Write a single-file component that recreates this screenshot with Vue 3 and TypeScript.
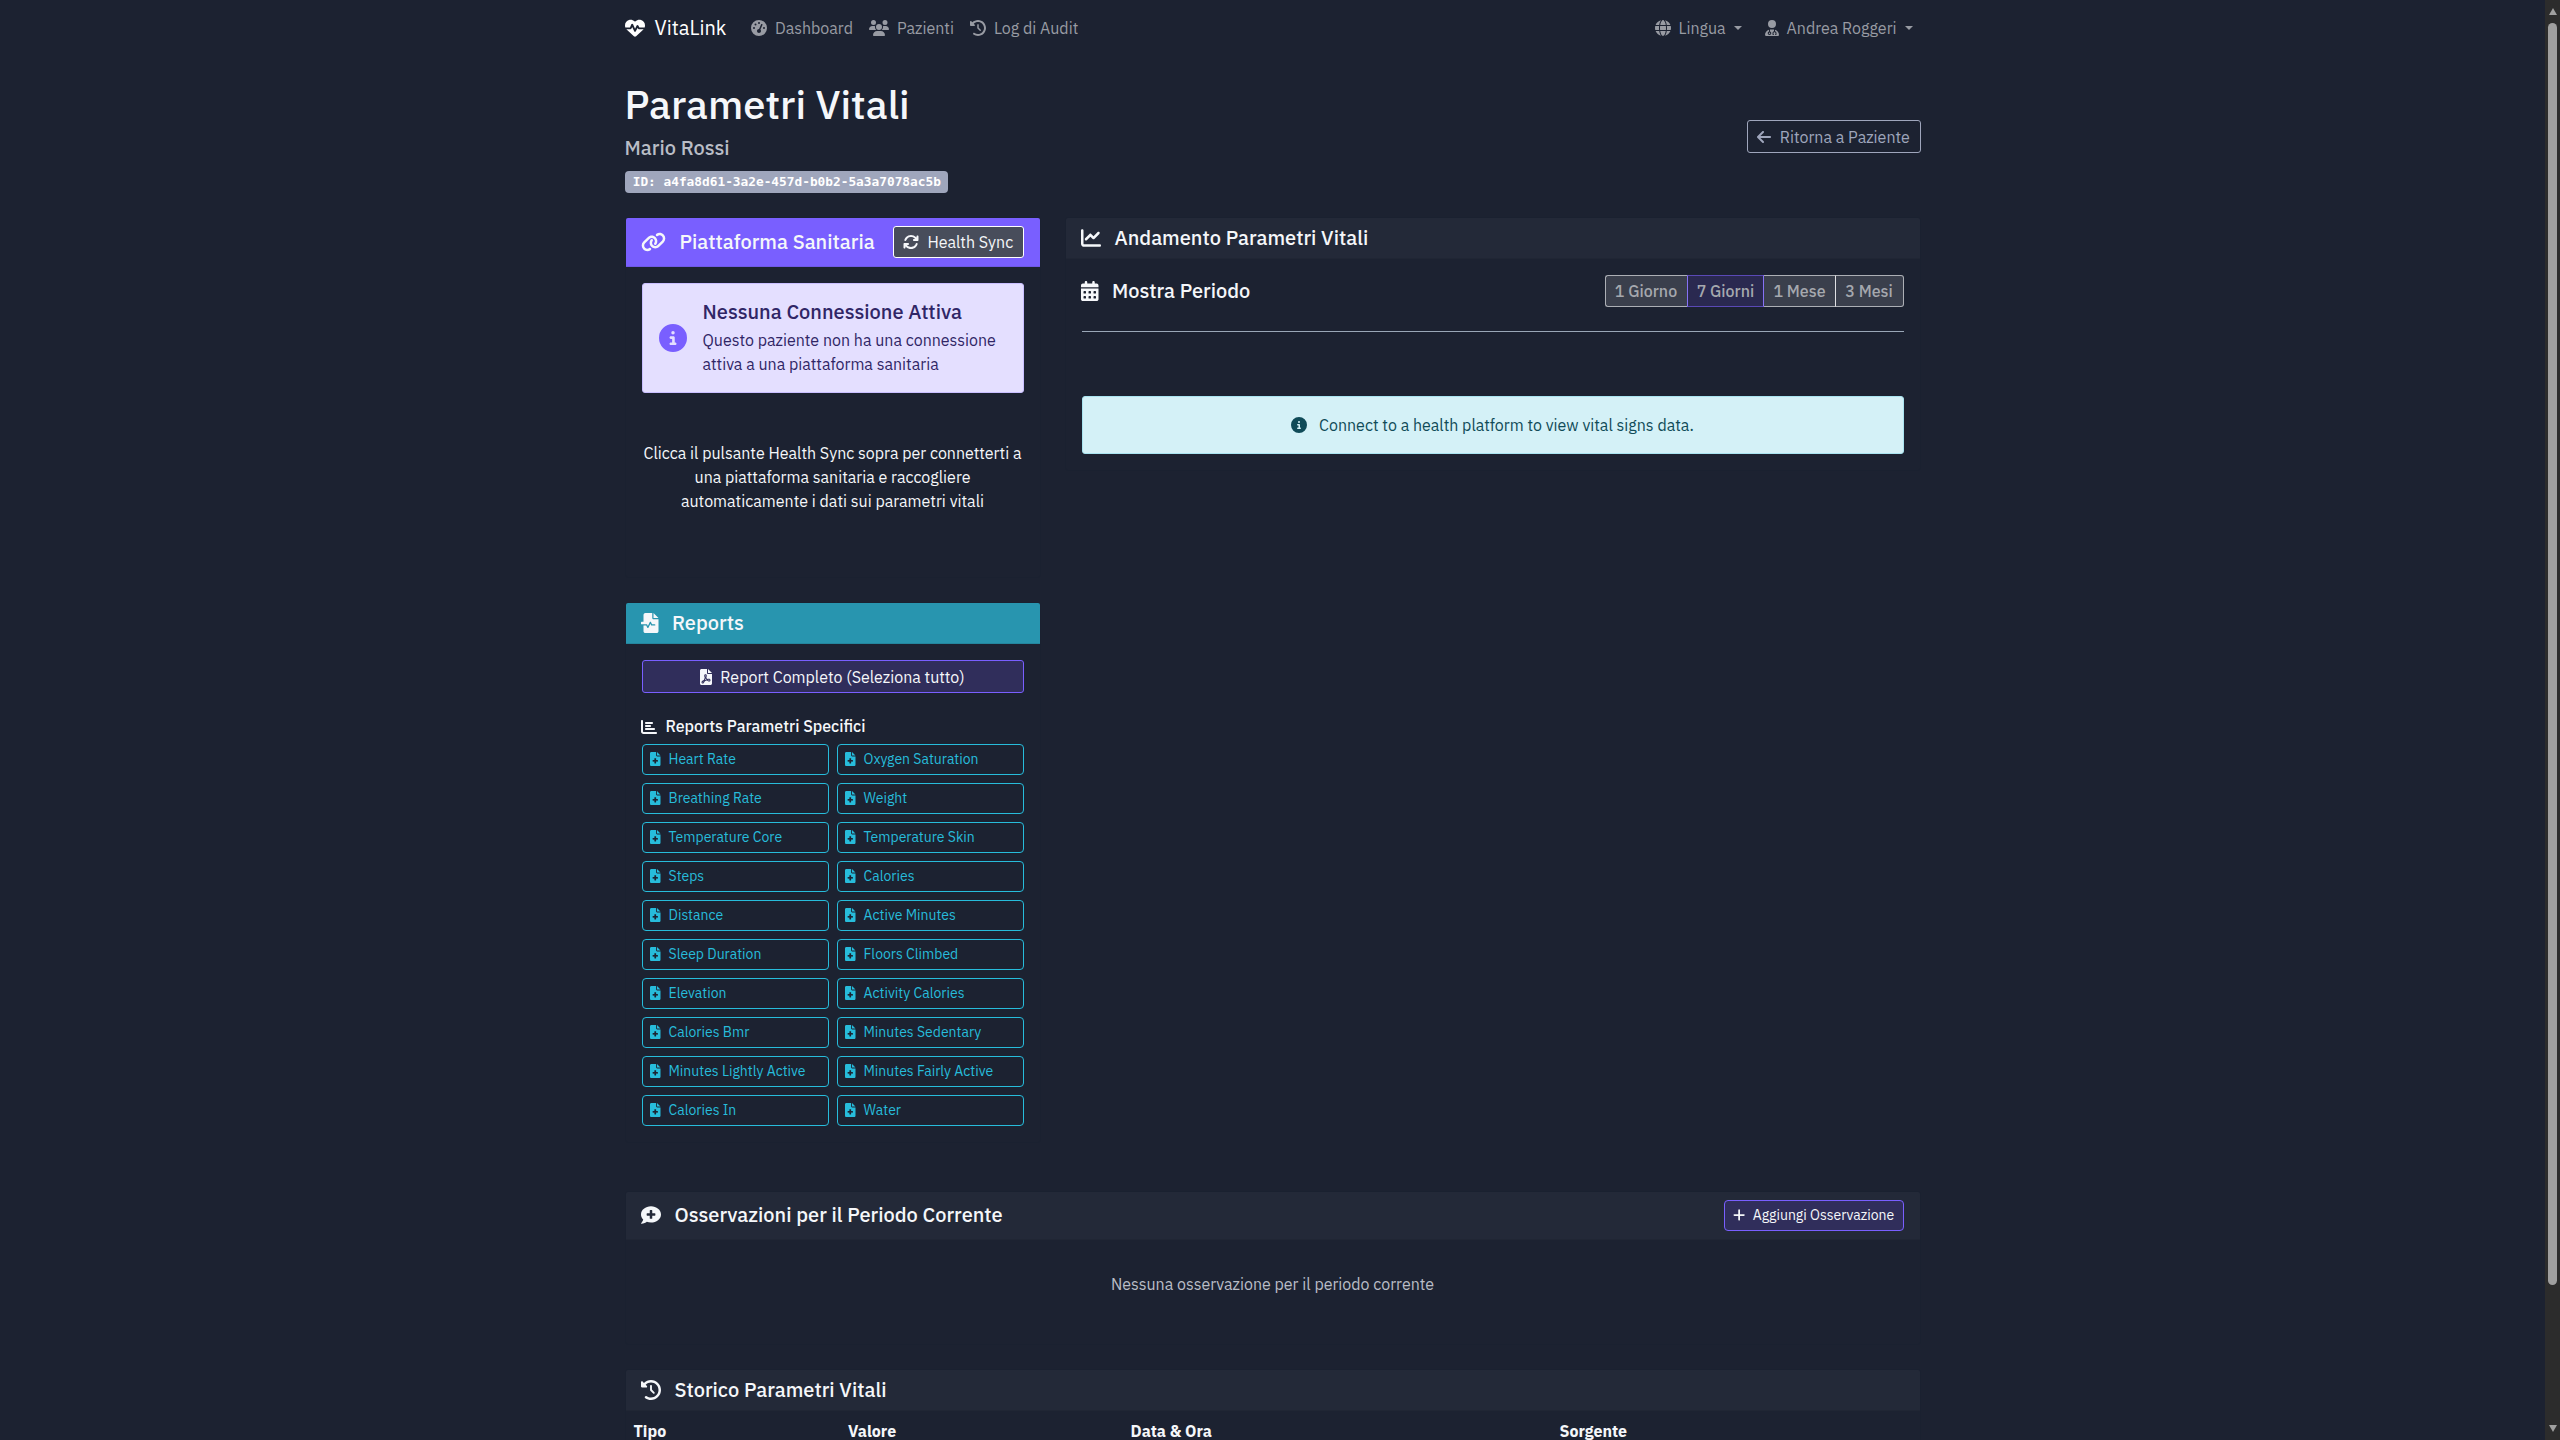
<script setup lang="ts">
import { h, type FunctionalComponent } from 'vue'

interface Glyph {
  w: number
  d: string
}

const glyphs: Record<string, Glyph> = {
  heart: {
    w: 512,
    d: 'M228.3 469.1L47.6 300.4c-4.2-3.9-8.2-8.1-11.9-12.4h87c22.6 0 43-13.6 51.7-34.5l10.5-25.2 49.3 109.5c3.8 8.5 12.1 14 21.4 14.1s17.8-5 22-13.3L320 253.7l1.7 3.4c9.5 19 28.9 31 50.1 31H476.3c-3.7 4.3-7.7 8.5-11.9 12.4L283.7 469.1c-7.5 7-17.4 10.9-27.7 10.9s-20.2-3.9-27.7-10.9zM503.7 240h-132c-3 0-5.8-1.7-7.2-4.4l-23.2-46.3c-4.1-8.1-12.4-13.3-21.5-13.3s-17.4 5.1-21.5 13.3l-41.4 82.8L205.9 158.2c-3.9-8.7-12.7-14.3-22.2-14.1s-18.1 5.9-21.8 14.8l-31.8 76.3c-1.2 3-4.2 4.9-7.4 4.9H16c-2.6 0-5 .4-7.3 1.1C3 225.2 0 208.2 0 190.9v-5.8c0-69.9 50.5-129.5 119.4-141C165 36.5 211.4 51.4 244 84l12 12 12-12c32.6-32.6 79-47.5 124.6-39.9C461.5 55.6 512 115.2 512 185.1v5.8c0 16.9-2.8 33.5-8.3 49.1z',
  },
  gauge: {
    w: 512,
    d: 'M0 256a256 256 0 1 1 512 0A256 256 0 1 1 0 256zM288 96a32 32 0 1 0 -64 0 32 32 0 1 0 64 0zM256 416c35.3 0 64-28.7 64-64c0-17.4-6.9-33.1-18.1-44.6L366 161.7c5.3-12.1-.2-26.3-12.3-31.6s-26.3 .2-31.6 12.3L257.9 288c-.6 0-1.3 0-1.9 0c-35.3 0-64 28.7-64 64s28.7 64 64 64zM176 144a32 32 0 1 0 -64 0 32 32 0 1 0 64 0zM96 288a32 32 0 1 0 0-64 32 32 0 1 0 0 64zm352-32a32 32 0 1 0 -64 0 32 32 0 1 0 64 0z',
  },
  users: {
    w: 640,
    d: 'M144 0a80 80 0 1 1 0 160A80 80 0 1 1 144 0zM512 0a80 80 0 1 1 0 160A80 80 0 1 1 512 0zM0 298.7C0 239.8 47.8 192 106.7 192h42.7c15.9 0 31 3.5 44.6 9.7c-1.3 7.2-1.9 14.7-1.9 22.3c0 38.2 16.8 72.5 43.3 96c-.2 0-.4 0-.7 0H21.3C9.6 320 0 310.4 0 298.7zM405.3 320c-.2 0-.4 0-.7 0c26.6-23.5 43.3-57.8 43.3-96c0-7.6-.7-15-1.9-22.3c13.6-6.3 28.7-9.7 44.6-9.7h42.7C592.2 192 640 239.8 640 298.7c0 11.8-9.6 21.3-21.3 21.3H405.3zM224 224a96 96 0 1 1 192 0 96 96 0 1 1 -192 0zM128 485.3C128 411.7 187.7 352 261.3 352H378.7C452.3 352 512 411.7 512 485.3c0 14.7-11.9 26.7-26.7 26.7H154.7c-14.7 0-26.7-11.9-26.7-26.7z',
  },
  history: {
    w: 512,
    d: 'M75 75L41 41C25.9 25.9 0 36.6 0 57.9V168c0 13.3 10.7 24 24 24H134.1c21.4 0 32.1-25.9 17-41l-30.8-30.8C155 85.5 203 64 256 64c106 0 192 86 192 192s-86 192-192 192c-40.8 0-78.6-12.7-109.7-34.4c-14.5-10.1-34.4-6.6-44.6 7.9s-6.6 34.4 7.9 44.6C151.2 495 201.7 512 256 512c141.4 0 256-114.6 256-256S397.4 0 256 0C185.3 0 121.3 28.7 75 75zm181 53c-13.3 0-24 10.7-24 24V256c0 6.4 2.5 12.5 7 17l72 72c9.4 9.4 24.6 9.4 33.9 0s9.4-24.6 0-33.9l-65-65V152c0-13.3-10.7-24-24-24z',
  },
  globe: {
    w: 512,
    d: 'M352 256c0 22.2-1.2 43.6-3.3 64H163.3c-2.2-20.4-3.3-41.8-3.3-64s1.2-43.6 3.3-64H348.7c2.2 20.4 3.3 41.8 3.3 64zm28.8-64H503.9c5.3 20.5 8.1 41.9 8.1 64s-2.8 43.5-8.1 64H380.8c2.1-20.6 3.2-42 3.2-64s-1.1-43.4-3.2-64zm112.6-32H376.7c-10-63.9-29.8-117.4-55.3-151.6c78.3 20.7 142 77.5 171.9 151.6zm-149.1 0H167.7c6.1-36.4 15.5-68.6 27-94.7c10.5-23.6 22.2-40.7 33.5-51.5C239.4 3.2 248.7 0 256 0s16.6 3.2 27.8 13.8c11.3 10.8 23 27.9 33.5 51.5c11.6 26 20.9 58.2 27 94.7zm-209 0H18.6C48.6 85.9 112.2 29.1 190.6 8.4C165.1 42.6 145.3 96.1 135.3 160zM8.1 192H131.2c-2.1 20.6-3.2 42-3.2 64s1.1 43.4 3.2 64H8.1C2.8 299.5 0 278.1 0 256s2.8-43.5 8.1-64zM194.7 446.6c-11.6-26-20.9-58.2-27-94.6H344.3c-6.1 36.4-15.5 68.6-27 94.6c-10.5 23.6-22.2 40.7-33.5 51.5C272.6 508.8 263.3 512 256 512s-16.6-3.2-27.8-13.8c-11.3-10.8-23-27.9-33.5-51.5zM135.3 352c10 63.9 29.8 117.4 55.3 151.6C112.2 482.9 48.6 426.1 18.6 352H135.3zm358.1 0c-30 74.1-93.6 130.9-171.9 151.6c25.5-34.2 45.2-87.7 55.3-151.6H493.4z',
  },
  doctor: {
    w: 448,
    d: 'M224 256a128 128 0 1 0 0-256 128 128 0 1 0 0 256zm-96 55.2C54 332.9 0 401.3 0 482.3C0 498.7 13.3 512 29.7 512H418.3c16.4 0 29.7-13.3 29.7-29.7c0-81-54-149.4-128-171.1V362c27.6 7.1 48 32.2 48 62v40c0 8.8-7.2 16-16 16H336c-8.8 0-16-7.2-16-16s7.2-16 16-16V424c0-17.7-14.3-32-32-32s-32 14.3-32 32v24c8.8 0 16 7.2 16 16s-7.2 16-16 16H256c-8.8 0-16-7.2-16-16V424c0-29.8 20.4-54.9 48-62V304.9c-6-.6-12.1-.9-18.3-.9H178.3c-6.2 0-12.3 .3-18.3 .9v65.4c23.1 6.9 40 28.3 40 53.7c0 30.9-25.1 56-56 56s-56-25.1-56-56c0-25.4 16.9-46.8 40-53.7V311.2zM144 448a24 24 0 1 0 0-48 24 24 0 1 0 0 48z',
  },
  arrowLeft: {
    w: 448,
    d: 'M9.4 233.4c-12.5 12.5-12.5 32.8 0 45.3l160 160c12.5 12.5 32.8 12.5 45.3 0s12.5-32.8 0-45.3L109.2 288 416 288c17.7 0 32-14.3 32-32s-14.3-32-32-32l-306.7 0L214.6 118.6c12.5-12.5 12.5-32.8 0-45.3s-32.8-12.5-45.3 0l-160 160z',
  },
  link: {
    w: 640,
    d: 'M579.8 267.7c56.5-56.5 56.5-148 0-204.5c-50-50-128.8-56.5-186.3-15.4l-1.6 1.1c-14.4 10.3-17.7 30.3-7.4 44.6s30.3 17.7 44.6 7.4l1.6-1.1c32.1-22.9 76-19.3 103.8 8.6c31.5 31.5 31.5 82.5 0 114L422.3 334.8c-31.5 31.5-82.5 31.5-114 0c-27.9-27.9-31.5-71.8-8.6-103.8l1.1-1.6c10.3-14.4 6.9-34.4-7.4-44.6s-34.4-6.9-44.6 7.4l-1.1 1.6C206.5 251.2 213 330 263 380c56.5 56.5 148 56.5 204.5 0L579.8 267.7zM60.2 244.3c-56.5 56.5-56.5 148 0 204.5c50 50 128.8 56.5 186.3 15.4l1.6-1.1c14.4-10.3 17.7-30.3 7.4-44.6s-30.3-17.7-44.6-7.4l-1.6 1.1c-32.1 22.9-76 19.3-103.8-8.6C74 372 74 321 105.5 289.5L217.7 177.2c31.5-31.5 82.5-31.5 114 0c27.9 27.9 31.5 71.8 8.6 103.9l-1.1 1.6c-10.3 14.4-6.9 34.4 7.4 44.6s34.4 6.9 44.6-7.4l1.1-1.6C433.5 260.8 427 182 377 132c-56.5-56.5-148-56.5-204.5 0L60.2 244.3z',
  },
  sync: {
    w: 512,
    d: 'M105.1 202.6c7.7-21.8 20.2-42.3 37.8-59.8c62.5-62.5 163.8-62.5 226.3 0L386.3 160H352c-17.7 0-32 14.3-32 32s14.3 32 32 32H463.5c0 0 0 0 0 0h.4c17.7 0 32-14.3 32-32V80c0-17.7-14.3-32-32-32s-32 14.3-32 32v35.2L414.4 97.6c-87.5-87.5-229.3-87.5-316.8 0C73.2 122 55.6 150.7 44.8 181.4c-5.9 16.7 2.9 34.9 19.5 40.8s34.9-2.9 40.8-19.5zM39 289.3c-5 1.5-9.8 4.2-13.7 8.2c-4 4-6.7 8.8-8.1 14c-.3 1.2-.6 2.5-.8 3.8c-.3 1.7-.4 3.4-.4 5.1V432c0 17.7 14.3 32 32 32s32-14.3 32-32V396.9l17.6 17.5 0 0c87.5 87.4 229.3 87.4 316.7 0c24.4-24.4 42.1-53.1 52.9-83.7c5.9-16.7-2.9-34.9-19.5-40.8s-34.9 2.9-40.8 19.5c-7.7 21.8-20.2 42.3-37.8 59.8c-62.5 62.5-163.8 62.5-226.3 0l-.1-.1L125.6 352H160c17.7 0 32-14.3 32-32s-14.3-32-32-32H48.4c-1.6 0-3.2 .1-4.8 .3s-3.1 .5-4.6 1z',
  },
  info: {
    w: 512,
    d: 'M256 512A256 256 0 1 0 256 0a256 256 0 1 0 0 512zM216 336h24V272H216c-13.3 0-24-10.7-24-24s10.7-24 24-24h48c13.3 0 24 10.7 24 24v88h8c13.3 0 24 10.7 24 24s-10.7 24-24 24H216c-13.3 0-24-10.7-24-24s10.7-24 24-24zm40-208a32 32 0 1 1 0 64 32 32 0 1 1 0-64z',
  },
  chartLine: {
    w: 512,
    d: 'M64 64c0-17.7-14.3-32-32-32S0 46.3 0 64V400c0 44.2 35.8 80 80 80H480c17.7 0 32-14.3 32-32s-14.3-32-32-32H80c-8.8 0-16-7.2-16-16V64zm406.6 86.6c12.5-12.5 12.5-32.8 0-45.3s-32.8-12.5-45.3 0L320 210.7l-57.4-57.4c-12.5-12.5-32.8-12.5-45.3 0l-112 112c-12.5 12.5-12.5 32.8 0 45.3s32.8 12.5 45.3 0L240 221.3l57.4 57.4c12.5 12.5 32.8 12.5 45.3 0l128-128z',
  },
  calendar: {
    w: 448,
    d: 'M128 0c17.7 0 32 14.3 32 32V64H288V32c0-17.7 14.3-32 32-32s32 14.3 32 32V64h48c26.5 0 48 21.5 48 48v48H0V112C0 85.5 21.5 64 48 64H96V32c0-17.7 14.3-32 32-32zM0 192H448V464c0 26.5-21.5 48-48 48H48c-26.5 0-48-21.5-48-48V192zm64 80v32c0 8.8 7.2 16 16 16h32c8.8 0 16-7.2 16-16V272c0-8.8-7.2-16-16-16H80c-8.8 0-16 7.2-16 16zm128 0v32c0 8.8 7.2 16 16 16h32c8.8 0 16-7.2 16-16V272c0-8.8-7.2-16-16-16H208c-8.8 0-16 7.2-16 16zm144-16c-8.8 0-16 7.2-16 16v32c0 8.8 7.2 16 16 16h32c8.8 0 16-7.2 16-16V272c0-8.8-7.2-16-16-16H336zM64 400v32c0 8.8 7.2 16 16 16h32c8.8 0 16-7.2 16-16V400c0-8.8-7.2-16-16-16H80c-8.8 0-16 7.2-16 16zm144-16c-8.8 0-16 7.2-16 16v32c0 8.8 7.2 16 16 16h32c8.8 0 16-7.2 16-16V400c0-8.8-7.2-16-16-16H208zm112 16v32c0 8.8 7.2 16 16 16h32c8.8 0 16-7.2 16-16V400c0-8.8-7.2-16-16-16H336c-8.8 0-16 7.2-16 16z',
  },
  fileWave: {
    w: 448,
    d: 'M320 0v128h128L320 0zM288 128L288 0H112C85.49 0 64 21.49 64 48V224H16C7.164 224 0 231.2 0 240v32C0 280.8 7.164 288 16 288h128c6.062 0 11.59 3.438 14.31 8.844L176 332.2l49.69-99.38c5.438-10.81 23.19-10.81 28.62 0L281.9 288H352c8.844 0 16 7.156 16 16S360.8 320 352 320h-80c-6.062 0-11.59-3.438-14.31-8.844L240 275.8l-49.69 99.38C187.6 380.6 182.1 384 176 384s-11.59-3.438-14.31-8.844L134.1 320H64v144C64 490.5 85.49 512 112 512h288c26.51 0 48-21.49 48-48V160h-127.1C302.3 160 288 145.7 288 128z',
  },
  filePdf: {
    w: 384,
    d: 'M184 208c0-4.406-3.594-8-8-8S168 203.6 168 208c0 2.062 .2969 23.31 9.141 50.25C179.1 249.6 184 226.2 184 208zM256 0v128h128L256 0zM80 422.4c0 9.656 10.47 11.97 14.38 6.375C99.27 421.9 108.8 408 120.1 388.6c-14.22 7.969-27.25 17.31-38.02 28.31C80.75 418.3 80 420.3 80 422.4zM224 128L224 0H48C21.49 0 0 21.49 0 48v416C0 490.5 21.49 512 48 512h288c26.51 0 48-21.49 48-48V160h-127.1C238.3 160 224 145.7 224 128zM292 312c24.26 0 44 19.74 44 44c0 24.67-18.94 44-43.13 44c-5.994 0-11.81-.9531-17.22-2.805c-20.06-6.758-38.38-15.96-54.55-27.39c-23.88 5.109-45.46 11.52-64.31 19.1c-14.43 26.31-27.63 46.15-36.37 58.41C112.1 457.8 100.8 464 87.94 464C65.92 464 48 446.1 48 424.1c0-11.92 3.74-21.82 11.18-29.51c16.18-16.52 37.37-30.99 63.02-43.05c11.75-22.83 21.94-46.04 30.33-69.14C136.2 242.4 136 208.4 136 208c0-22.05 17.95-40 40-40c22.06 0 40 17.95 40 40c0 24.1-7.227 55.75-8.938 62.63c-1.006 3.273-2.035 6.516-3.082 9.723c7.83 14.46 17.7 27.21 29.44 38.05C263.1 313.4 284.3 312.1 287.8 312H292zM156.5 354.6c17.98-6.5 36.13-11.44 52.92-15.19c-12.42-12.06-22.17-25.12-29.8-38.16C172.3 320.6 164.4 338.5 156.5 354.6zM292.9 368C299 368 304 363 304 356.9C304 349.4 298.6 344 292 344H288c-.3438 .0313-16.83 .9687-40.95 4.75c11.27 7 24.12 13.19 38.84 18.12C288.2 367.6 290.6 368 292.9 368z',
  },
  fileMedical: {
    w: 384,
    d: 'M256 0v128h128L256 0zM224 128L224 0H48C21.49 0 0 21.49 0 48v416C0 490.5 21.49 512 48 512h288c26.51 0 48-21.49 48-48V160h-127.1C238.3 160 224 145.7 224 128zM288 301.7v36.57C288 345.9 281.9 352 274.3 352L224 351.1v50.29C224 409.9 217.9 416 210.3 416H173.7C166.1 416 160 409.9 160 402.3V351.1L109.7 352C102.1 352 96 345.9 96 338.3V301.7C96 294.1 102.1 288 109.7 288H160V237.7C160 230.1 166.1 224 173.7 224h36.57C217.9 224 224 230.1 224 237.7V288h50.29C281.9 288 288 294.1 288 301.7z',
  },
  chartBar: {
    w: 512,
    d: 'M32 32c17.7 0 32 14.3 32 32V400c0 8.8 7.2 16 16 16H480c17.7 0 32 14.3 32 32s-14.3 32-32 32H80c-44.2 0-80-35.8-80-80V64C0 46.3 14.3 32 32 32zm96 96c0-17.7 14.3-32 32-32l192 0c17.7 0 32 14.3 32 32s-14.3 32-32 32H160c-17.7 0-32-14.3-32-32zm32 64H288c17.7 0 32 14.3 32 32s-14.3 32-32 32H160c-17.7 0-32-14.3-32-32s14.3-32 32-32zm0 96H416c17.7 0 32 14.3 32 32s-14.3 32-32 32H160c-17.7 0-32-14.3-32-32s14.3-32 32-32z',
  },
  comment: {
    w: 512,
    d: 'M256 32C114.6 32 0 125.1 0 240c0 49.6 21.4 95 57 130.7C44.5 421.1 2.7 466 2.2 466.5c-2.2 2.3-2.8 5.7-1.5 8.7S4.8 480 8 480c66.3 0 116-31.8 140.6-51.4 32.7 12.3 69 19.4 107.4 19.4 141.4 0 256-93.1 256-208S397.4 32 256 32zM368 258c0 8-6 14-14 14h-66v66c0 8-6 14-14 14h-36c-8 0-14-6-14-14v-66h-66c-8 0-14-6-14-14v-36c0-8 6-14 14-14h66v-66c0-8 6-14 14-14h36c8 0 14 6 14 14v66h66c8 0 14 6 14 14v36z',
  },
  plus: {
    w: 448,
    d: 'M432 256c0 17.69-14.33 32.01-32 32.01H256v144c0 17.69-14.33 31.99-32 31.99s-32-14.3-32-31.99v-144H48c-17.67 0-32-14.32-32-32.01s14.33-31.99 32-31.99H192v-144c0-17.69 14.33-32.01 32-32.01s32 14.32 32 32.01v144h144C417.7 224 432 238.3 432 256z',
  },
}

// Icons are one em high; their width follows the glyph's own aspect ratio.
const Icon: FunctionalComponent<{ name: string }> = (props) => {
  const g = glyphs[props.name]
  return h(
    'svg',
    { viewBox: `0 0 ${g.w} 512`, style: { width: `${g.w / 512}em`, height: '1em', flex: 'none', display: 'block' }, 'aria-hidden': 'true' },
    [h('path', { d: g.d, fill: 'currentColor' })],
  )
}
Icon.props = ['name']

const navLinks = [
  { icon: 'gauge', label: 'Dashboard' },
  { icon: 'users', label: 'Pazienti' },
  { icon: 'history', label: 'Log di Audit' },
]

const periods = [
  { label: '1 Giorno', active: false },
  { label: '7 Giorni', active: true },
  { label: '1 Mese', active: false },
  { label: '3 Mesi', active: false },
]

const reports = [
  'Heart Rate', 'Oxygen Saturation',
  'Breathing Rate', 'Weight',
  'Temperature Core', 'Temperature Skin',
  'Steps', 'Calories',
  'Distance', 'Active Minutes',
  'Sleep Duration', 'Floors Climbed',
  'Elevation', 'Activity Calories',
  'Calories Bmr', 'Minutes Sedentary',
  'Minutes Lightly Active', 'Minutes Fairly Active',
  'Calories In', 'Water',
]
</script>

<template>
  <div class="screen">
    <div class="page">
      <div class="container">
        <nav class="navbar">
          <a class="brand"><Icon name="heart" /><span>VitaLink</span></a>
          <a v-for="l in navLinks" :key="l.label" class="nav-link"><Icon :name="l.icon" /><span>{{ l.label }}</span></a>
          <div class="nav-right">
            <a class="nav-link"><Icon name="globe" /><span>Lingua</span><i class="caret"></i></a>
            <a class="nav-link"><Icon name="doctor" /><span>Andrea Roggeri</span><i class="caret"></i></a>
          </div>
        </nav>

        <header class="page-head">
          <div>
            <h1>Parametri Vitali</h1>
            <h5 class="patient">Mario Rossi</h5>
            <div class="badge">ID: a4fa8d61-3a2e-457d-b0b2-5a3a7078ac5b</div>
          </div>
          <button class="btn back"><Icon name="arrowLeft" /><span>Ritorna a Paziente</span></button>
        </header>

        <div class="columns">
          <div class="col-left">
            <section class="card">
              <div class="card-header purple">
                <h5><Icon name="link" /><span>Piattaforma Sanitaria</span></h5>
                <button class="btn sync"><Icon name="sync" /><span>Health Sync</span></button>
              </div>
              <div class="card-body">
                <div class="alert primary">
                  <Icon name="info" />
                  <div>
                    <h5>Nessuna Connessione Attiva</h5>
                    <p>Questo paziente non ha una connessione<br />attiva a una piattaforma sanitaria</p>
                  </div>
                </div>
                <p class="hint">Clicca il pulsante Health Sync sopra per connetterti a<br />una piattaforma sanitaria e raccogliere<br />automaticamente i dati sui parametri vitali</p>
              </div>
            </section>

            <section class="card">
              <div class="card-header teal">
                <h5><Icon name="fileWave" /><span>Reports</span></h5>
              </div>
              <div class="card-body">
                <button class="btn full"><Icon name="filePdf" /><span>Report Completo (Seleziona tutto)</span></button>
                <h6><Icon name="chartBar" /><span>Reports Parametri Specifici</span></h6>
                <div class="report-grid">
                  <button v-for="r in reports" :key="r" class="btn-report"><Icon name="fileMedical" /><span>{{ r }}</span></button>
                </div>
              </div>
            </section>
          </div>

          <div class="col-right">
            <section class="card">
              <div class="card-header">
                <h5><Icon name="chartLine" /><span>Andamento Parametri Vitali</span></h5>
              </div>
              <div class="card-body">
                <div class="period-row">
                  <h5><Icon name="calendar" /><span>Mostra Periodo</span></h5>
                  <div class="btn-group">
                    <button v-for="p in periods" :key="p.label" class="seg" :class="{ active: p.active }">{{ p.label }}</button>
                  </div>
                </div>
                <hr />
                <div class="alert info"><Icon name="info" /><span>Connect to a health platform to view vital signs data.</span></div>
              </div>
            </section>
          </div>
        </div>

        <section class="card">
          <div class="card-header obs">
            <h5><Icon name="comment" /><span>Osservazioni per il Periodo Corrente</span></h5>
            <button class="btn-add"><Icon name="plus" /><span>Aggiungi Osservazione</span></button>
          </div>
          <p class="empty">Nessuna osservazione per il periodo corrente</p>
        </section>

        <section class="card">
          <div class="card-header">
            <h5><Icon name="history" /><span>Storico Parametri Vitali</span></h5>
          </div>
          <div class="table-head">
            <span>Tipo</span><span>Valore</span><span>Data &amp; Ora</span><span>Sorgente</span>
          </div>
        </section>
      </div>
    </div>
    <div class="scrollbar">
      <i class="arrow up"></i>
      <i class="thumb"></i>
      <i class="arrow down"></i>
    </div>
  </div>
</template>

<style>
body {
  background: #1c2231;
  overflow: hidden;
}
</style>

<style scoped>
* {
  box-sizing: border-box;
}
.screen {
  display: flex;
  height: 1440px;
  overflow: hidden;
  background: #1c2231;
  color: #f5f7fa;
  font: 400 16px/24px "IBM Plex Sans", Roboto, "Liberation Sans", sans-serif;
}
.page {
  flex: 1;
  height: 1440px;
  overflow: hidden;
}
.container {
  width: 1296px;
  margin: 0 auto;
}
h1, h5, h6, p, hr {
  margin: 0;
  font-weight: 500;
}
span {
  white-space: nowrap;
}
button {
  font: inherit;
  color: inherit;
  background: none;
  margin: 0;
  white-space: nowrap;
}
h5 {
  display: flex;
  align-items: center;
  gap: 13px;
  font-size: 20px;
  line-height: 24px;
}
.card-header h5,
.period-row h5 {
  gap: 13.5px;
  margin-left: -0.5px;
}

.navbar {
  display: flex;
  align-items: center;
  height: 56px;
}
.brand {
  display: flex;
  align-items: center;
  gap: 10px;
  margin-right: 24.6px;
  font-size: 20px;
  color: #fff;
}
.nav-link {
  display: flex;
  align-items: center;
  gap: 8px;
  margin-right: 16px;
  color: #989ba3;
}
.nav-right {
  display: flex;
  gap: 8px;
  margin-left: auto;
}
.nav-right .nav-link {
  gap: 7.5px;
}
.nav-right .nav-link:first-child {
  margin-right: 15px;
}
.nav-right .nav-link:last-child {
  margin-right: 7.5px;
}
.caret {
  margin-left: 1px;
  border-top: 4.8px solid;
  border-left: 4.8px solid transparent;
  border-right: 4.8px solid transparent;
}

.page-head {
  display: flex;
  justify-content: space-between;
  align-items: center;
  height: 113px;
  margin: 24px 0;
}
h1 {
  font-size: 40px;
  line-height: 48px;
}
.patient {
  margin: 8px 0 11px;
  color: #b9bdc6;
}
.badge {
  width: 323px;
  height: 22px;
  padding-left: 8.2px;
  border-radius: 4px;
  background: #9fa6bc;
  color: #fff;
  font: 700 12.8px/21px "DejaVu Sans Mono", monospace;
  white-space: pre;
}
.btn {
  display: flex;
  align-items: center;
  justify-content: center;
  gap: 8px;
  height: 32.4px;
  padding: 0 9.6px;
  border: 1px solid;
  border-radius: 3px;
}
.back {
  width: 174px;
  padding-top: 1px;
  gap: 8.6px;
  border-color: #9fa6bc;
  color: #9fa6bc;
}

.columns {
  display: flex;
  gap: 24px;
  margin-bottom: 24px;
}
.col-left {
  width: 416px;
}
.col-right {
  width: 856px;
}
.card {
  margin-bottom: 24px;
  border: 1px solid #1a2130;
  border-radius: 3px;
}
.card-header {
  display: flex;
  align-items: center;
  justify-content: space-between;
  height: 41px;
  padding: 0 16px;
  border-bottom: 1px solid #202634;
  border-radius: 2px 2px 0 0;
  background: #232938;
}
.card-header.purple {
  height: 49px;
  background: #795fff;
  border-color: #6f58e6;
}
.card-header.teal {
  background: #2895af;
  border-color: #24869e;
}
.card-header.obs {
  height: 48px;
}
.card-body {
  padding: 16px;
}
.sync {
  width: 131px;
  gap: 8.6px;
  border-color: #fff;
  background: #484d5b;
}
.alert {
  display: flex;
  align-items: center;
  padding: 16px;
  border: 1px solid;
  border-radius: 3px;
}
.alert.primary {
  height: 110px;
  background: #e4dfff;
  border-color: #c9bfff;
  color: #302666;
}
.alert.primary > svg {
  font-size: 28px;
  margin-right: 16px;
  color: #795fff;
}
.alert.primary h5 {
  margin-bottom: 4px;
}
p {
  font-weight: 400;
}
.hint {
  margin: 48px -10px;
  text-align: center;
}

.full {
  width: 100%;
  height: 33px;
  padding-top: 1px;
  background: #302e5b;
  border-color: #795fff;
}
h6 {
  display: flex;
  align-items: center;
  gap: 8.5px;
  margin: 24px 0 7.4px -0.5px;
  font-size: 16px;
  line-height: 19.2px;
}
.report-grid {
  display: grid;
  grid-template-columns: 1fr 1fr;
  gap: 8px;
}
.btn-report {
  display: flex;
  align-items: center;
  gap: 8px;
  height: 31px;
  padding: 0 7.5px;
  border: 1px solid #27bcdb;
  border-radius: 4px;
  color: #27bcdb;
  font-size: 14px;
  line-height: 21px;
}

.period-row {
  display: flex;
  justify-content: space-between;
  align-items: center;
  height: 32.4px;
}
.btn-group {
  display: flex;
}
.seg {
  height: 32.4px;
  padding: 0;
  border: 1px solid #acafb5;
  border-left-width: 0;
  background: #3a3f4c;
  color: #a5a8ae;
  font-weight: 500;
}
.seg:first-child {
  width: 82px;
  border-left-width: 1px;
  border-right: 0;
  border-radius: 3px 0 0 3px;
}
.seg:last-child {
  width: 68px;
  border-radius: 0 3px 3px 0;
}
.seg:nth-child(3) {
  width: 72px;
  padding-left: 1px;
  border-right-color: #dfe0e3;
}
.seg.active {
  width: 77px;
  padding-left: 1px;
  border: 1px solid #5a49b6;
  border-left-color: #8672f5;
  border-right-color: #8672f5;
  background: #2a2950;
}
hr {
  height: 1px;
  margin: 24px 0 64px;
  border: 0;
  background: #9aa7b7;
}
.alert.info {
  justify-content: center;
  gap: 12px;
  height: 58px;
  background: #d4f1f7;
  border-color: #a9e4f0;
  color: #104b58;
}

.btn-add {
  display: flex;
  align-items: center;
  justify-content: center;
  gap: 7.6px;
  width: 180px;
  height: 31px;
  padding: 0;
  border: 1px solid #795fff;
  border-radius: 4px;
  background: #302e5b;
  font-size: 14px;
}
.empty {
  padding: 32px 0 48px;
  text-align: center;
  color: #b9bdc6;
}
.table-head {
  display: grid;
  grid-template-columns: 214.6px 282.4px 429px 1fr;
  padding: 8px 0 8px 8px;
  font-weight: 700;
}

.scrollbar {
  display: flex;
  flex-direction: column;
  align-items: center;
  width: 15px;
  padding: 8px 0 8px;
  background: #2c2c2c;
}
.arrow {
  width: 0;
  height: 0;
  border-left: 4.5px solid transparent;
  border-right: 4.5px solid transparent;
}
.up {
  border-bottom: 7px solid #9f9f9f;
}
.down {
  margin-top: auto;
  border-top: 7px solid #9f9f9f;
}
.thumb {
  width: 9px;
  height: 1262px;
  margin-top: 8px;
  border-radius: 5px;
  background: #9f9f9f;
}
</style>
